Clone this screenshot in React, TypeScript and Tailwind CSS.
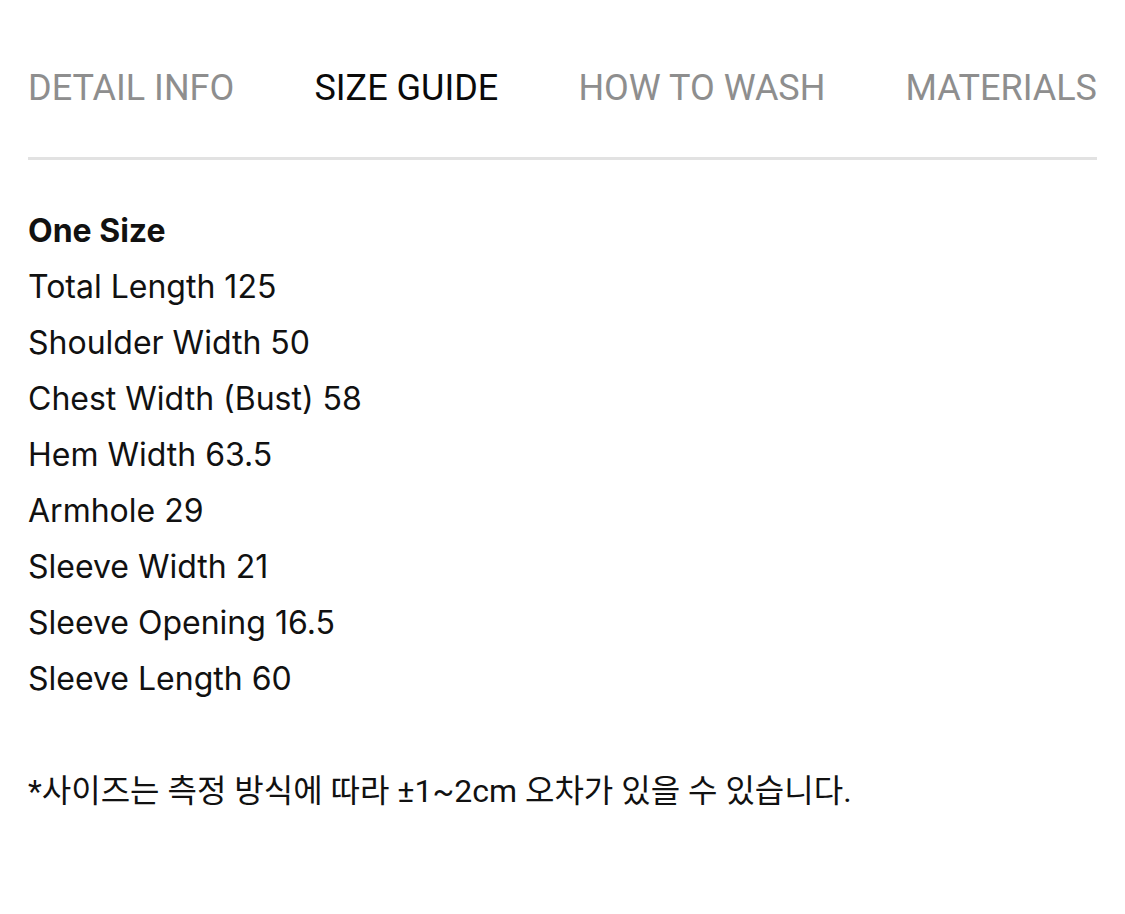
import React from "react";

const tabs = ["DETAIL INFO", "SIZE GUIDE", "HOW TO WASH", "MATERIALS"];
const active = "SIZE GUIDE";

const sizes = [
  "Total Length 125",
  "Shoulder Width 50",
  "Chest Width (Bust) 58",
  "Hem Width 63.5",
  "Armhole 29",
  "Sleeve Width 21",
  "Sleeve Opening 16.5",
  "Sleeve Length 60",
];

export default function App() {
  return (
    <div className="min-h-screen bg-white px-[28px] pt-[62px]">
      <nav className="flex items-center justify-between pb-[43px] font-['Roboto',sans-serif] text-[36px] leading-[52px]">
        {tabs.map((tab) => (
          <button
            key={tab}
            className={tab === active ? "text-[#0a0a0a]" : "text-[#8e8e8e]"}
          >
            {tab}
          </button>
        ))}
      </nav>
      <div className="h-[3px] w-full bg-[#e2e2e2]" />

      <section className="pt-[43px] font-['Inter',sans-serif] text-[32px] leading-[56px] text-[#111111]">
        <h3 className="font-bold">One Size</h3>
        {sizes.map((s) => (
          <p key={s}>{s}</p>
        ))}
        <p className="mt-[56px] font-['Roboto','Noto_Sans_CJK_KR',sans-serif] text-[32px]">
          *사이즈는 측정 방식에 따라 ±1~2cm 오차가 있을 수 있습니다.
        </p>
      </section>
    </div>
  );
}
